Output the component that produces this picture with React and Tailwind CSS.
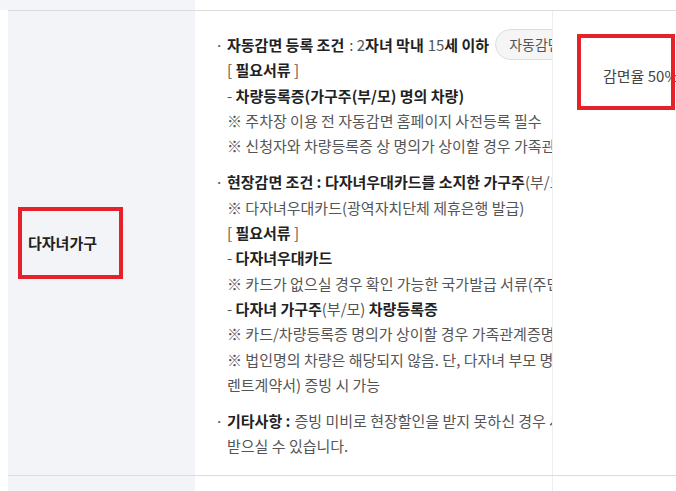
const B = ({ children }) => <b className="font-bold text-[#222]">{children}</b>;

const Line = ({ children }) => <div className="whitespace-nowrap">{children}</div>;

const Group = ({ first, rest, className = "" }) => (
  <div className={className}>
    <div className="flex h-[25.3px] items-center whitespace-nowrap">
      <span className="w-[12px] shrink-0 -ml-[12px]">·</span>
      <span className="flex items-center">{first}</span>
    </div>
    {rest.map((r, i) => (
      <Line key={i}>{r}</Line>
    ))}
  </div>
);

export default function App() {
  return (
    <div className="relative w-[676px] h-[491px] overflow-hidden bg-white font-['Noto_Sans_CJK_KR','Noto_Sans',sans-serif] text-[15px] text-[#555]">
      {/* top strip from previous row */}
      <div className="flex h-[10px]">
        <div className="w-[195px] bg-[#f4f5f8]" />
        <div className="flex-1" />
      </div>

      <div className="ml-[8px] flex border-y border-[#dcdcdc]">
        <div className="w-[187px] shrink-0 bg-[#f2f4f8] flex items-center pl-[20px] font-bold text-[#222]">
          다자녀가구
        </div>

        <div className="w-[358px] shrink-0 border-r border-[#eee] pt-[21px] pb-[16px] pl-[32px] pr-[3px] overflow-hidden leading-[25.3px]">
          <Group
            first={
              <>
                <B>자동감면 등록 조건</B>
                <span className="ml-[5px]">: 2</span>
                <B>자녀 막내</B>
                <span className="ml-[4px]">15</span>
                <B>세 이하</B>
                <span className="ml-[6px] h-[31px] px-[13px] rounded-full border border-[#ddd] bg-[#f5f5f5] text-[14px] text-[#555] flex items-center">
                  자동감면 신청하기
                </span>
              </>
            }
            rest={[
              <>
                [ <B>필요서류</B> ]
              </>,
              <>
                - <B>차량등록증(가구주(부/모) 명의 차량)</B>
              </>,
              "※ 주차장 이용 전 자동감면 홈페이지 사전등록 필수",
              "※ 신청자와 차량등록증 상 명의가 상이할 경우 가족관계증명서 제출",
            ]}
          />
          <Group
            className="mt-[11px]"
            first={
              <>
                <B>현장감면 조건 : 다자녀우대카드를 소지한 가구주</B>(부/모)
              </>
            }
            rest={[
              "※ 다자녀우대카드(광역자치단체 제휴은행 발급)",
              <>
                [ <B>필요서류</B> ]
              </>,
              <>
                - <B>다자녀우대카드</B>
              </>,
              "※ 카드가 없으실 경우 확인 가능한 국가발급 서류(주민등록등본 등)",
              <>
                - <B>다자녀 가구주</B>(부/모) <B>차량등록증</B>
              </>,
              "※ 카드/차량등록증 명의가 상이할 경우 가족관계증명서 제출",
              "※ 법인명의 차량은 해당되지 않음. 단, 다자녀 부모 명의(장기",
              "렌트계약서) 증빙 시 가능",
            ]}
          />
          <Group
            className="mt-[11px]"
            first={
              <>
                <B>기타사항 :</B>
                <span className="ml-[4px]">증빙 미비로 현장할인을 받지 못하신 경우 사후환급</span>
              </>
            }
            rest={["받으실 수 있습니다."]}
          />
        </div>

        <div className="flex-1 min-w-0 pl-[50px] pt-[52px] leading-[25px] text-[#444] whitespace-nowrap overflow-hidden">
          감면율 50%
        </div>
      </div>

      {/* next row start */}
      <div className="ml-[8px] flex h-[20px]">
        <div className="w-[187px] bg-[#f2f4f8]" />
        <div className="w-[358px] border-r border-[#eee]" />
        <div className="flex-1" />
      </div>

      {/* annotation boxes */}
      <div className="absolute left-[18px] top-[207px] w-[105px] h-[72px] border-4 border-[#e5212b]" />
      <div className="absolute left-[577px] top-[34px] w-[98px] h-[76px] border-4 border-[#e5212b]" />
    </div>
  );
}
